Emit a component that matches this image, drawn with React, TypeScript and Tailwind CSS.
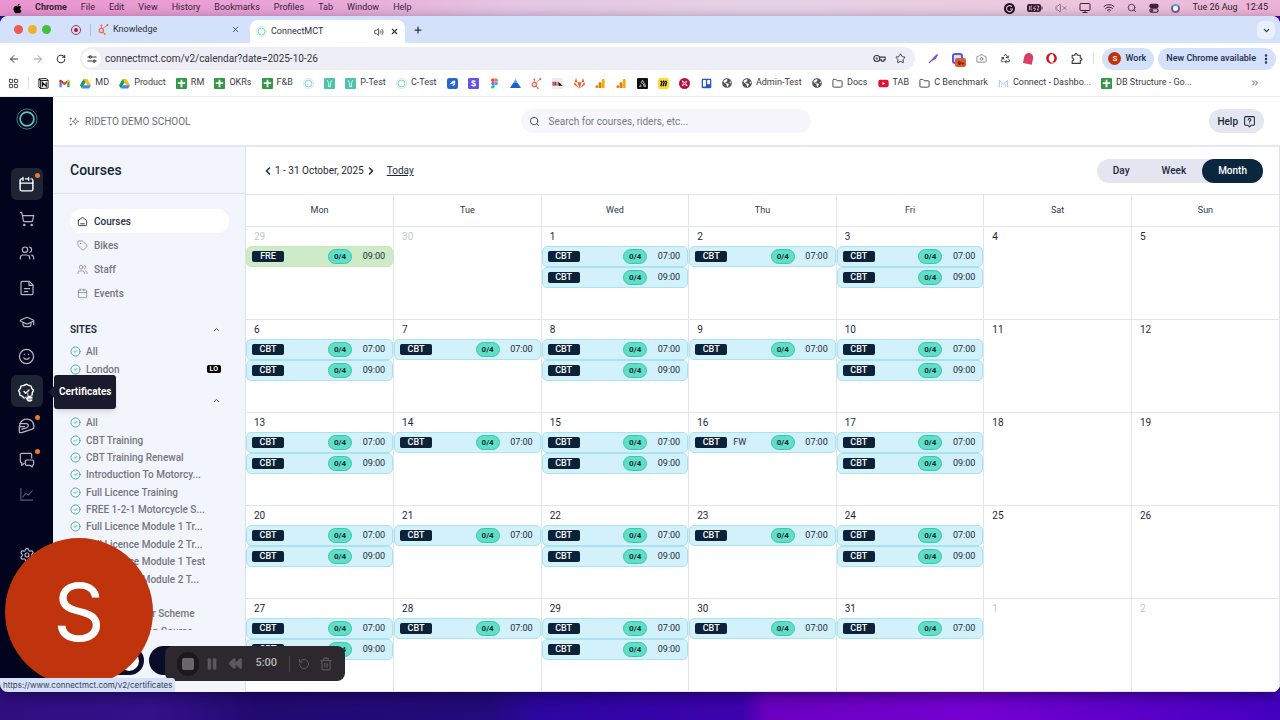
import React from 'react';
import {
    ArrowLeft, ArrowRight, Camera, ChevronDown, ChevronLeft, ChevronRight, ChevronUp, ChevronsRight,
    CircleCheck, EllipsisVertical, Folder, GraduationCap, LayoutGrid, Monitor, Pause,
    Plus, Recycle, Rewind, RotateCcw, RotateCw, Search, Settings, ShoppingCart, Smile, Star, Tag,
    Trash2, Users, Volume2, VolumeX, Wifi, X,
} from 'lucide-react';
import { FaApple, FaGitlab, FaGlobeAmericas, FaHubspot, FaOpera, FaTrello, FaYoutube } from 'react-icons/fa';

type Svg = React.SVGProps<SVGSVGElement>;

const Line: React.FC<Svg> = ({ children, ...props }) => (
    <svg viewBox="0 0 24 24" fill="none" stroke="currentColor" strokeWidth={1.5} strokeLinecap="round" strokeLinejoin="round" {...props}>
        {children}
    </svg>
);

const CalendarIcon: React.FC<Svg> = (props) => (
    <Line {...props}>
        <path d="M15 4V2M15 4V6M15 4H10.5M3 10V19C3 20.1 3.9 21 5 21H19C20.1 21 21 20.1 21 19V10H3Z" />
        <path d="M3 10V6C3 4.9 3.9 4 5 4H7M7 2V6M21 10V6C21 4.9 20.1 4 19 4H18.5" />
    </Line>
);

const HomeIcon: React.FC<Svg> = (props) => (
    <Line {...props}>
        <path d="M3 9.5L12 3l9 6.5V19a2 2 0 0 1-2 2H5a2 2 0 0 1-2-2V9.5zM8 17h8" />
    </Line>
);

const PageIcon: React.FC<Svg> = (props) => (
    <Line {...props}>
        <path d="M3 20V4a2 2 0 0 1 2-2h10.500L21 7.500V20a2 2 0 0 1-2 2H5a2 2 0 0 1-2-2z" />
        <path d="M15 2v6h6M8 13h8M8 17.500h5" />
    </Line>
);

const SealIcon: React.FC<Svg> = (props) => (
    <Line {...props}>
        <path d="M10.500 2.500a2.200 2.200 0 0 1 3 0l1.500 1 2 .2a2.200 2.200 0 0 1 2 2.200l.5 1.800 1.500 1.500a2.200 2.200 0 0 1 0 3l-1 1.600.1 2a2.200 2.200 0 0 1-2 2.200l-1.800.6-1.300 1.500a2.200 2.200 0 0 1-3 .4L12 20l-1.600.500a2.200 2.200 0 0 1-3-.4L6.100 18.600 4.300 18a2.200 2.200 0 0 1-2-2.200l.3-2-1-1.600a2.200 2.200 0 0 1 .4-3l1.500-1.500.3-1.800a2.200 2.200 0 0 1 2.200-2.200l2-.2z" />
        <path d="M8.500 12l2.500 2.500 4.500-4.500" />
    </Line>
);

const HelmetIcon: React.FC<Svg> = (props) => (
    <Line {...props}>
        <path d="M2 20.500C1 13 2.500 3 12.500 3 18.500 3 22 7.500 22.500 13c.2 2.500-.5 3.500-2.500 4.200L5 22c-2 .5-2.700 0-3-1.500z" />
        <path d="M3 9.500h8.500c2 0 3 1 3 2.700 0 1.800-1 2.500-2.500 3L5.500 17M2.500 13.500H9" />
    </Line>
);

const ChatsIcon: React.FC<Svg> = (props) => (
    <Line {...props}>
        <path d="M8 17l-4 3v-4a2 2 0 0 1-2-2V4c0-1 1-2 2-2h13a2 2 0 0 1 2 2v5" />
        <path d="M11.500 12h8.500a2 2 0 0 1 2 2v4a2 2 0 0 1-2 2v2.500L16.500 20h-5a2 2 0 0 1-2-2v-4c0-1.100.9-2 2-2z" />
    </Line>
);

const SparkIcon: React.FC<Svg> = (props) => (
    <Line {...props}>
        <path d="M14 5c.8 4.500 2.500 6.200 7 7-4.500.8-6.200 2.500-7 7-.8-4.500-2.500-6.200-7-7 4.500-.8 6.200-2.500 7-7z" />
        <path d="M4 4v3M2.500 5.500h3M4 17v3M2.500 18.500h3M3 11v.500" />
    </Line>
);

const HelpIcon: React.FC<Svg> = (props) => (
    <Line {...props}>
        <path d="M5 3h14a2 2 0 0 1 2 2v12a2 2 0 0 1-2 2h-4l-3 3-3-3H5a2 2 0 0 1-2-2V5c0-1.100.9-2 2-2z" />
        <path d="M9.500 9c0-3.500 5-3.500 5 0 0 2-2.500 2-2.500 4M12 16v.100" />
    </Line>
);

const KeyIcon: React.FC<Svg> = (props) => (
    <Line {...props}>
        <circle cx="7" cy="12" r="5.500" />
        <circle cx="7" cy="12" r="1" />
        <path d="M12 9.500h10.500v5H20v2.500h-4v-2.500h-4" />
    </Line>
);

const PuzzleIcon: React.FC<Svg> = (props) => (
    <Line {...props}>
        <path d="M4 6h5c-1-4 5-4 4.500 0H19v5c4-.5 4 5 0 4.500V21H4v-5c4 0 4-5 0-5z" />
    </Line>
);

const Ring: React.FC<Svg> = (props) => (
    <svg viewBox="0 0 24 24" fill="none" stroke="#5cc8c0" {...props}>
        <circle cx="12" cy="12" r="11" strokeWidth="1" opacity=".7" />
        <circle cx="12" cy="12" r="7.500" strokeWidth="1.800" />
    </svg>
);

const GmailIcon: React.FC<Svg> = (props) => (
    <svg viewBox="0 0 24 24" {...props}>
        <path d="M1 6v14h5V10z" fill="#4285f4" />
        <path d="M23 6v14h-5V10z" fill="#34a853" />
        <path d="M6 5l6 5 6-5v6l-6 5-6-5z" fill="#ea4335" />
        <path d="M1 6c0-3 3-3 5-1v6L1 7.500z" fill="#c5221f" />
        <path d="M23 6c0-3-3-3-5-1v6l5-3.500z" fill="#fbbc04" />
    </svg>
);

const DriveIcon: React.FC<Svg> = (props) => (
    <svg viewBox="0 0 24 24" {...props}>
        <path d="M8 2h8l8 14h-8z" fill="#fbbc04" />
        <path d="M8 2l4 7-8 14-4-7z" fill="#0f9d58" />
        <path d="M4 23l4-7h16l-4 7z" fill="#4285f4" />
    </svg>
);

const SheetIcon: React.FC<Svg> = (props) => (
    <svg viewBox="0 0 24 24" {...props}>
        <rect width="24" height="24" rx="2" fill="#35994a" />
        <path d="M10 4h4v5h6v4h-6v7h-4v-7H4V9h6z" fill="#fff" />
    </svg>
);

const TealIcon: React.FC<Svg> = (props) => (
    <svg viewBox="0 0 24 24" {...props}>
        <rect width="24" height="24" rx="2" fill="#4fc4ac" />
        <path d="M7 5l3 6v8h4v-8l3-6" stroke="#d9fff5" strokeWidth="2" fill="none" />
    </svg>
);

const NotionIcon: React.FC<Svg> = (props) => (
    <svg viewBox="0 0 24 24" {...props}>
        <path d="M2 2l16-1 4 4v17l-17 1-3-4z" fill="#fff" stroke="#111" strokeWidth="2" />
        <path d="M2 2l4 4 16-1M6 6v17M10 19v-9l8 8V9" fill="none" stroke="#111" strokeWidth="2.500" />
    </svg>
);

const JiraIcon: React.FC<Svg> = (props) => (
    <svg viewBox="0 0 24 24" {...props}>
        <rect width="24" height="24" rx="5" fill="#2a62d0" />
        <path d="M5 14l8-8h5v5l-4 1zM12 18l1-4 5-3-1 4z" fill="#fff" />
    </svg>
);

const StripeIcon: React.FC<Svg> = (props) => (
    <svg viewBox="0 0 24 24" {...props}>
        <rect width="24" height="24" rx="3" fill="#6350e8" />
        <path d="M16.500 7.500c-3-1.500-8-1.500-8 1.200 0 3.300 7.500 2.300 7.500 5.800 0 3-5 3-8.500 1.200" fill="none" stroke="#fff" strokeWidth="3" />
    </svg>
);

const FigmaIcon: React.FC<Svg> = (props) => (
    <svg viewBox="0 0 24 24" {...props}>
        <path d="M12 1H8a3.700 3.700 0 0 0 0 7.400h4z" fill="#f24e1e" />
        <path d="M12 1h4a3.700 3.700 0 0 1 0 7.400h-4z" fill="#ff7262" />
        <path d="M12 8.400H8a3.700 3.700 0 0 0 0 7.300h4z" fill="#a259ff" />
        <circle cx="15.700" cy="12" r="3.700" fill="#1abcfe" />
        <path d="M8 15.700h4v3.600a3.700 3.700 0 1 1-4-3.600z" fill="#0acf83" />
    </svg>
);

const PeakIcon: React.FC<Svg> = (props) => (
    <svg viewBox="0 0 24 24" {...props}>
        <path d="M12 2l5 9H7z" fill="#5c9df0" />
        <path d="M7 11h10l7 11H0z" fill="#1f5fc4" />
    </svg>
);

const SwatchIcon: React.FC<Svg> = (props) => (
    <svg viewBox="0 0 24 24" {...props}>
        <rect width="24" height="24" rx="3" fill="#ececf0" />
        <path d="M1 8h5v9H1z" fill="#e0443a" />
        <path d="M6 8h4v9H6z" fill="#4b53c8" />
        <path d="M10 8h4v9h-4z" fill="#f2a33a" />
        <path d="M14 8l9 9h-9z" fill="#111" />
    </svg>
);

const AnalyticsIcon: React.FC<Svg> = (props) => (
    <svg viewBox="0 0 24 24" {...props}>
        <rect x="15" y="2" width="6" height="20" rx="2" fill="#f9ab00" />
        <rect x="8" y="9" width="6" height="13" rx="2" fill="#e37400" />
        <circle cx="4" cy="19" r="3" fill="#e37400" />
    </svg>
);

const SentryIcon: React.FC<Svg> = (props) => (
    <svg viewBox="0 0 24 24" {...props}>
        <rect width="24" height="24" rx="2" fill="#111" />
        <path d="M12 5l7 13h-4c0-4-2-6-5-7M4.500 18H9c0-2-1-3-2-3.500M12 5l-3 5.500" fill="none" stroke="#fff" strokeWidth="1.600" />
    </svg>
);

const MiroIcon: React.FC<Svg> = (props) => (
    <svg viewBox="0 0 24 24" {...props}>
        <rect width="24" height="24" rx="5" fill="#fddc2e" />
        <path d="M6 6l2.500 3L6 18M11 6l2.500 3L11 18M16 6l2.500 3L16 18" fill="none" stroke="#111" strokeWidth="3" />
    </svg>
);

const PinwheelIcon: React.FC<Svg> = (props) => (
    <svg viewBox="0 0 24 24" {...props}>
        <circle cx="12" cy="12" r="12" fill="#b3123f" />
        <path d="M7 6l5 4 5-3-3 5 4 5-6-3-5 3 3-5z" fill="none" stroke="#fff" strokeWidth="1.800" />
    </svg>
);

const MailLightIcon: React.FC<Svg> = (props) => (
    <svg viewBox="0 0 24 24" fill="none" strokeWidth="2" {...props}>
        <path d="M3 20V5l9 8 9-8v15" stroke="#9cc3e6" />
        <path d="M8 20v-8M16 20v-8" stroke="#c8d3e2" />
    </svg>
);

const HandIcon: React.FC<Svg> = (props) => (
    <svg viewBox="0 0 16 18" {...props}>
        <path d="M5 9V2.500C5 .8 7.500.8 7.500 2.500V7c.5-1 2-.8 2.200.2.600-.8 2-.5 2.100.5.800-.6 2.200-.2 2.200 1v3.500c0 3-1.500 4.800-4.500 4.800S5 15.800 4 14l-2.500-4C1 8.500 3 8 4 9.300z" fill="#fff" stroke="#111" strokeWidth="1" />
        <path d="M7.500 11v3M9.500 11v3M11.500 11v3" stroke="#111" strokeWidth=".8" />
    </svg>
);

const icon = 'size-[11px] shrink-0';

const bookmarks: { icon: React.ReactNode; label?: string; name?: string }[] = [
    { icon: <NotionIcon className={icon} />, name: 'Notion' },
    { icon: <GmailIcon className={icon} />, name: 'Gmail' },
    { icon: <DriveIcon className={icon} />, label: 'MD' },
    { icon: <DriveIcon className={icon} />, label: 'Product' },
    { icon: <SheetIcon className={icon} />, label: 'RM' },
    { icon: <SheetIcon className={icon} />, label: 'OKRs' },
    { icon: <SheetIcon className={icon} />, label: 'F&B' },
    { icon: <Ring className={icon} />, name: 'Connect' },
    { icon: <TealIcon className={icon} />, name: 'Test' },
    { icon: <TealIcon className={icon} />, label: 'P-Test' },
    { icon: <Ring className={icon} />, label: 'C-Test' },
    { icon: <JiraIcon className={icon} />, name: 'Jira' },
    { icon: <StripeIcon className={icon} />, name: 'Stripe' },
    { icon: <FigmaIcon className={icon} />, name: 'Figma' },
    { icon: <PeakIcon className={icon} />, name: 'Peak' },
    { icon: <FaHubspot className="size-[11px] shrink-0 -scale-x-100 text-[#ee6a4c]" />, name: 'HubSpot' },
    { icon: <SwatchIcon className={icon} />, name: 'Swatch' },
    { icon: <FaGitlab className="size-[11px] shrink-0 text-[#e8622c]" />, name: 'GitLab' },
    { icon: <AnalyticsIcon className={icon} />, name: 'Analytics' },
    { icon: <AnalyticsIcon className={icon} />, name: 'Analytics' },
    { icon: <SentryIcon className={icon} />, name: 'Sentry' },
    { icon: <MiroIcon className={icon} />, name: 'Miro' },
    { icon: <PinwheelIcon className={icon} />, name: 'Pinwheel' },
    { icon: <FaTrello className="size-[11px] shrink-0 text-[#2a55c4]" />, name: 'Trello' },
    { icon: <FaGlobeAmericas className="size-[10px] shrink-0 text-[#55565c]" />, name: 'Website' },
    { icon: <FaGlobeAmericas className="size-[10px] shrink-0 text-[#55565c]" />, label: 'Admin-Test' },
    { icon: <FaGlobeAmericas className="size-[10px] shrink-0 text-[#55565c]" />, name: 'Website' },
    { icon: <Folder className={icon} />, label: 'Docs' },
    { icon: <FaYoutube className="size-[11px] shrink-0 text-[#e01234]" />, label: 'TAB' },
    { icon: <Folder className={icon} />, label: 'C Benchmark' },
    { icon: <MailLightIcon className={icon} />, label: 'Connect - Dashbo...' },
    { icon: <SheetIcon className={icon} />, label: 'DB Structure - Go...' },
];

const menus = ['File', 'Edit', 'View', 'History', 'Bookmarks', 'Profiles', 'Tab', 'Window', 'Help'];

const MenuBar = () => (
    <div className="flex h-4 shrink-0 items-center px-3 text-[9px] text-[#3b2337]">
        <FaApple className="size-[11px] text-black" />
        <span className="ml-3 font-bold">Chrome</span>
        <div className="ml-[14px] flex gap-[14px]">
            {menus.map((menu) => <span key={menu}>{menu}</span>)}
        </div>
        <div className="ml-auto flex items-center gap-3">
            <svg viewBox="0 0 24 24" className="size-[11px]">
                <circle cx="12" cy="12" r="12" fill="#1c1219" />
                <path d="M17 8a6.500 6.500 0 1 0 1.500 5H13" fill="none" stroke="#eebcdb" strokeWidth="2.500" />
            </svg>
            <svg viewBox="0 0 32 16" className="h-2 w-4">
                <rect width="28" height="16" rx="4" fill="#3b2337" />
                <path d="M30 5v6" stroke="#3b2337" strokeWidth="2" />
                <path d="M5 4v8M10 4H8v8h2M17 3l-4 6h4l-2 5M20 4h4l-3 8h3" fill="none" stroke="#eebcdb" strokeWidth="1.500" />
            </svg>
            <VolumeX className="size-3 opacity-50" />
            <Monitor className="size-3" />
            <Wifi className="size-3" />
            <Search className="size-[10px]" />
            <Line className="size-[10px]" strokeWidth={2.5}>
                <rect x="2" y="3" width="20" height="8" rx="4" fill="currentColor" />
                <rect x="2" y="14" width="20" height="8" rx="4" />
                <circle cx="7" cy="18" r="2" fill="currentColor" />
            </Line>
            <span className="size-[9px] rounded-full border-2 border-[#6f5f9c] border-t-[#3fb4c4] bg-white" />
            <span className="flex gap-2 text-[#2e1f2c]"><span>Tue 26 Aug</span><span>12:45</span></span>
        </div>
    </div>
);

const TabStrip = () => (
    <div className="flex h-[27px] shrink-0 items-end rounded-t-lg bg-[#d4e1fb] text-[9px] text-[#2c3140]">
        <div className="flex h-full w-[250px] items-center pl-[14px]">
            <div className="flex gap-[5px]">
                <span className="size-[9px] rounded-full bg-[#ec5a52]" />
                <span className="size-[9px] rounded-full bg-[#f0b12b]" />
                <span className="size-[9px] rounded-full bg-[#44c13c]" />
            </div>
            <span className="ml-5 flex size-[10px] items-center justify-center rounded-full border border-[#a33346]">
                <span className="size-1 rounded-full bg-[#b3122b]" />
            </span>
            <span className="ml-[9px] h-3 w-px bg-[#aebcd8]" />
            <FaHubspot className="ml-[7px] size-[11px] -scale-x-100 text-[#ee6a4c]" />
            <span className="ml-1">Knowledge</span>
            <button aria-label="Close Knowledge" className="mr-[10px] ml-auto"><X className="size-[9px]" /></button>
        </div>
        <div className="flex h-[23px] w-[155px] items-center rounded-t-lg bg-white px-[6px]">
            <Ring className="size-[11px]" />
            <span className="ml-1">ConnectMCT</span>
            <Volume2 className="ml-auto size-[10px]" />
            <button aria-label="Close ConnectMCT" className="ml-[6px]"><X className="size-[9px]" strokeWidth={3} /></button>
        </div>
        <button aria-label="New tab" className="mb-[8px] ml-2"><Plus className="size-[10px]" strokeWidth={3} /></button>
        <button aria-label="Search tabs" className="mr-[5px] mb-1 ml-auto flex size-[18px] items-center justify-center rounded-md bg-[#eaf1fd]">
            <ChevronDown className="size-[9px]" strokeWidth={3} />
        </button>
    </div>
);

const AddressBar = () => (
    <div className="flex h-[31px] shrink-0 items-center bg-white pr-1 pl-2 text-[#35353c]">
        <div className="flex w-[72px] items-center gap-[12px]">
            <button aria-label="Back"><ArrowLeft className="size-3" /></button>
            <button aria-label="Forward" className="text-[#9a9aa2]"><ArrowRight className="size-3" /></button>
            <button aria-label="Reload"><RotateCw className="size-[10px]" strokeWidth={2.5} /></button>
        </div>
        <div className="flex h-[23px] flex-1 items-center rounded-full bg-[#eeeef6] pr-[9px] pl-[2px]">
            <span className="flex size-[19px] items-center justify-center rounded-full bg-white">
                <Line className="size-[10px]" strokeWidth={2.5}>
                    <path d="M2 7h3M12 7h10M2 17h10M20 17h2" />
                    <circle cx="8" cy="7" r="2.500" />
                    <circle cx="17" cy="17" r="2.500" />
                </Line>
            </span>
            <input aria-label="Address" defaultValue="connectmct.com/v2/calendar?date=2025-10-26" className="ml-1 min-w-0 flex-1 text-[10px] outline-none" />
            <KeyIcon className="size-[13px]" strokeWidth={2} />
            <Star className="ml-[9px] size-[11px]" />
        </div>
        <div className="ml-[13px] flex items-center gap-[13px]">
            <Line className="size-[11px] text-[#7d4fc0]" strokeWidth={3}><path d="M3 21L20 4l-4 8-6 3" /></Line>
            <span className="relative size-[11px] rounded-[3px] border-2 border-[#5a58e0] bg-[#dcdcff]">
                <span className="absolute top-[3px] left-px rounded-[2px] bg-[#e05a2e] px-[2px] text-[6px] leading-[9px] font-bold text-[#3b1505]">9+</span>
            </span>
            <Camera className="size-[11px] text-[#85858c]" />
            <Recycle className="size-[11px]" />
            <span className="h-[11px] w-[9px] rotate-12 rounded-t-full rounded-b-md bg-[#d93f68]" />
            <FaOpera className="size-[11px] text-[#d3101d]" />
            <PuzzleIcon className="size-[13px]" strokeWidth={2} />
        </div>
        <span className="ml-[10px] h-[11px] w-px bg-[#d4dcf0]" />
        <button className="ml-2 flex h-[22px] items-center gap-1 rounded-full bg-[#d4e1fb] pr-2 pl-[6px] text-[9px] font-medium text-[#1d2b4a]">
            <span className="flex size-[13px] items-center justify-center rounded-full bg-[#bd330e] text-[8px] text-white">S</span>
            Work
        </button>
        <button className="ml-1 flex h-[22px] items-center gap-1 rounded-full bg-[#d4e1fb] pr-1 pl-2 text-[9px] font-medium text-[#1d2b4a]">
            New Chrome available
            <EllipsisVertical className="size-3" strokeWidth={3} />
        </button>
    </div>
);

const BookmarkBar = () => (
    <div className="flex h-[23px] shrink-0 items-center border-b border-[#ececf0] bg-white pr-5 pb-[4px] pl-2 text-[9px] text-[#3a3b42]">
        <LayoutGrid className="size-[11px]" />
        <span className="ml-[9px] h-3 w-px bg-[#dcdce4]" />
        <div className="mr-[58px] ml-[9px] flex flex-1 items-center justify-between">
            {bookmarks.map((bookmark, idx) => (
                <a key={idx} href="#" aria-label={bookmark.name} className="flex items-center gap-1 whitespace-nowrap">
                    {bookmark.icon}
                    {bookmark.label}
                </a>
            ))}
        </div>
        <ChevronsRight className="size-[10px]" />
    </div>
);

const railItems: { label: string; icon: React.ReactNode; dot?: boolean; active?: boolean; dim?: boolean }[] = [
    { label: 'Calendar', icon: <CalendarIcon className="size-[17px]" strokeWidth={2} />, dot: true, active: true },
    { label: 'Orders', icon: <ShoppingCart className="size-4" strokeWidth={1.8} /> },
    { label: 'Riders', icon: <Users className="size-4" strokeWidth={1.8} /> },
    { label: 'Documents', icon: <PageIcon className="size-4" strokeWidth={1.8} /> },
    { label: 'Training', icon: <GraduationCap className="size-4" strokeWidth={1.8} /> },
    { label: 'Customers', icon: <Smile className="size-[17px]" strokeWidth={1.8} /> },
    { label: 'Certificates', icon: <SealIcon className="size-[17px]" strokeWidth={2} />, active: true },
    { label: 'Bikes', icon: <HelmetIcon className="size-[17px]" strokeWidth={1.8} />, dot: true },
    { label: 'Messages', icon: <ChatsIcon className="size-4" strokeWidth={1.8} />, dot: true },
    { label: 'Reports', icon: <Line className="size-[15px]" strokeWidth={1.8}><path d="M3 2v19h19M6 16l5-6 4 3 6-7" /></Line>, dim: true },
];

const Rail = () => (
    <nav className="relative flex w-[53px] shrink-0 flex-col items-center bg-[#02031c] pt-[11px] text-[#b4b5c4]">
        <Ring className="size-[22px]" />
        <div className="mt-[38px] flex h-[343px] flex-col justify-between">
            {railItems.map((item) => (
                <a
                    key={item.label}
                    href="#"
                    aria-label={item.label}
                    className={`relative flex size-8 items-center justify-center rounded-md ${item.active ? 'bg-[#1d2433] text-white' : ''} ${item.dim ? 'opacity-50' : ''}`}
                >
                    {item.icon}
                    {item.dot && <span className="absolute top-[5px] right-[3px] size-[5px] rounded-full bg-[#f0742a]" />}
                </a>
            ))}
        </div>
        <a href="#" aria-label="Settings" className="mt-9"><Settings className="size-4" strokeWidth={1.8} /></a>
        <div className="absolute top-[278px] left-[46px] z-20 flex items-center">
            <span className="-mr-1 ml-1 size-2 rotate-45 bg-[#191a2c]" />
            <span role="tooltip" className="rounded-[3px] bg-[#191a2c] px-[5px] py-[9px] text-[10px] leading-4 font-bold text-white shadow-md">Certificates</span>
        </div>
        <HandIcon className="absolute top-[294px] left-6 h-3 w-[10px]" />
    </nav>
);

const views = [
    { label: 'Courses', icon: <HomeIcon className="size-[11px]" strokeWidth={2} /> },
    { label: 'Bikes', icon: <Tag className="size-[11px]" strokeWidth={1.5} /> },
    { label: 'Staff', icon: <Users className="size-[11px]" strokeWidth={1.5} /> },
    { label: 'Events', icon: <CalendarIcon className="size-[11px]" /> },
];

const courseTypes = [
    'All',
    'CBT Training',
    'CBT Training Renewal',
    'Introduction To Motorcy...',
    'Full Licence Training',
    'FREE 1-2-1 Motorcycle S...',
    'Full Licence Module 1 Tr...',
    'Full Licence Module 2 Tr...',
    'Full Licence Module 1 Test',
    'Full Licence Module 2 T...',
    'Gear',
    'Enhanced Rider Scheme',
    'Bike Conversion Course',
];

const FilterRow: React.FC<{ label: string; badge?: string }> = ({ label, badge }) => (
    <label className="relative flex items-center gap-[5px] whitespace-nowrap">
        <input type="checkbox" defaultChecked className="sr-only" />
        <CircleCheck className="size-[11px] shrink-0 text-[#3fae98]" />
        {label}
        {badge && <span className="ml-auto rounded-[2px] bg-black px-[3px] text-[7px] leading-2 font-bold text-white">{badge}</span>}
    </label>
);

const GroupTitle: React.FC<{ title: string }> = ({ title }) => (
    <button className="flex h-5 w-full items-center justify-between text-[10px] font-semibold text-[#1b2a3a]">
        {title}
        <ChevronUp className="size-[9px]" />
    </button>
);

const Sidebar = () => (
    <aside className="flex w-[193px] shrink-0 flex-col border-r border-[#dfe2ea] bg-[#f3f5fc] pl-px">
        <h1 className="flex h-[47px] shrink-0 items-center border-b border-[#e0e3eb] pl-4 text-[14px] font-medium text-[#13273a]">Courses</h1>
        <ul className="mx-4 mt-[15px] text-[10px] font-medium text-[#73767f]">
            {views.map((view, idx) => (
                <li key={view.label}>
                    <a href="#" className={`flex h-6 items-center gap-[6px] rounded-full pl-[7px] ${idx === 0 ? 'bg-white text-[#26323f]' : ''}`}>
                        {view.icon}
                        {view.label}
                    </a>
                </li>
            ))}
        </ul>
        <div className="mt-[14px] mr-6 ml-4 text-[10px] font-medium text-[#73767f]">
            <GroupTitle title="SITES" />
            <div className="mt-1 grid h-[35px] auto-rows-fr">
                <FilterRow label="All" />
                <FilterRow label="London" badge="LO" />
            </div>
            <div className="mt-3"><GroupTitle title="COURSES" /></div>
            <div className="mt-1 h-[216px] overflow-hidden">
                <div className="grid h-[226px] auto-rows-fr">
                    {courseTypes.map((course) => <FilterRow key={course} label={course} />)}
                </div>
            </div>
        </div>
        <div className="mt-4 ml-4 flex gap-[5px]">
            <button aria-label="Filters" className="flex h-[29px] w-[74px] items-center justify-end rounded-full bg-[#0a0c2a] pr-[5px]">
                <span className="size-5 rounded-full bg-white" />
            </button>
            <button aria-label="Collapse" className="h-[29px] w-[74px] rounded-full bg-[#0a0c2a]" />
        </div>
    </aside>
);

interface CourseEvent {
    code: string;
    time: string;
    note?: string;
}

const one: CourseEvent[] = [{ code: 'CBT', time: '07:00' }];
const two: CourseEvent[] = [...one, { code: 'CBT', time: '09:00' }];

interface Day {
    date: number;
    muted?: boolean;
    events?: CourseEvent[];
}

const weeks: Day[][] = [
    [
        { date: 29, muted: true, events: [{ code: 'FRE', time: '09:00' }] }, { date: 30, muted: true },
        { date: 1, events: two }, { date: 2, events: one }, { date: 3, events: two }, { date: 4 }, { date: 5 },
    ],
    [
        { date: 6, events: two }, { date: 7, events: one }, { date: 8, events: two }, { date: 9, events: one },
        { date: 10, events: two }, { date: 11 }, { date: 12 },
    ],
    [
        { date: 13, events: two }, { date: 14, events: one }, { date: 15, events: two },
        { date: 16, events: [{ code: 'CBT', time: '07:00', note: 'FW' }] },
        { date: 17, events: two }, { date: 18 }, { date: 19 },
    ],
    [
        { date: 20, events: two }, { date: 21, events: one }, { date: 22, events: two }, { date: 23, events: one },
        { date: 24, events: two }, { date: 25 }, { date: 26 },
    ],
    [
        { date: 27, events: two }, { date: 28, events: one }, { date: 29, events: two }, { date: 30, events: one },
        { date: 31, events: one }, { date: 1, muted: true }, { date: 2, muted: true },
    ],
];

const EventRow: React.FC<{ event: CourseEvent }> = ({ event }) => (
    <button className={`flex h-[21px] w-full items-center rounded-[5px] border pr-[7px] pl-[5px] text-[9px] text-[#1b2a3a] ${event.code === 'FRE' ? 'border-[#c8e9c0] bg-[#cdebc6]' : 'border-[#a9e4ee] bg-[#d3f1fa]'}`}>
        <span className="w-8 rounded-[2px] bg-[#0b2238] text-center leading-[11px] font-medium text-white">{event.code}</span>
        {event.note && <span className="ml-[6px]">{event.note}</span>}
        <span className="ml-auto w-6 rounded-full border border-[#3cc5ad] bg-[#5fe0c6] text-center text-[8px] leading-[13px] font-bold">0/4</span>
        <span className="w-[33px] text-right">{event.time}</span>
    </button>
);

const Calendar = () => (
    <main className="flex min-w-0 flex-1 flex-col border-r border-[#e0e0ea] bg-white">
        <div className="flex h-[47px] shrink-0 items-center pr-4 pl-4 text-[10px] text-[#1b2a3a]">
            <button aria-label="Previous month"><ChevronLeft className="size-3" strokeWidth={3} /></button>
            <span className="mx-px">1 - 31 October, 2025</span>
            <button aria-label="Next month"><ChevronRight className="size-3" strokeWidth={3} /></button>
            <button className="ml-[10px] underline">Today</button>
            <div className="ml-auto flex h-6 rounded-full bg-[#e4e5f0] font-medium">
                <button className="px-4">Day</button>
                <button className="px-4">Week</button>
                <button className="rounded-full bg-[#0b2740] px-4 text-white">Month</button>
            </div>
        </div>
        <table className="w-full table-fixed border-collapse">
            <thead>
                <tr className="h-8 text-[9px] text-[#2c3947]">
                    {['Mon', 'Tue', 'Wed', 'Thu', 'Fri', 'Sat', 'Sun'].map((day) => (
                        <th key={day} className="border border-[#e4e4ec] p-0 font-normal first:border-l-0 last:border-r-0">{day}</th>
                    ))}
                </tr>
            </thead>
            <tbody>
                {weeks.map((week, idx) => (
                    <tr key={idx} className="h-[93px]">
                        {week.map((day) => (
                            <td key={day.date} className="border border-[#e4e4ec] p-0 align-top first:border-l-0 last:border-r-0">
                                <div className={`pl-2 text-[10px] leading-[19px] ${day.muted ? 'text-[#c3c6ce]' : 'text-[#1b2a3a]'}`}>{day.date}</div>
                                {day.events?.map((event) => <EventRow key={event.time} event={event} />)}
                            </td>
                        ))}
                    </tr>
                ))}
            </tbody>
        </table>
    </main>
);

const Header = () => (
    <header className="grid h-[50px] shrink-0 grid-cols-3 items-center border-b-2 border-[#e6e7ee] bg-white px-4 text-[10px]">
        <div className="flex items-center gap-[5px] text-[#6b6e78]">
            <SparkIcon className="size-[11px]" strokeWidth={2} />
            RIDETO DEMO SCHOOL
        </div>
        <label className="flex h-6 w-[290px] items-center gap-2 justify-self-center rounded-full bg-[#f6f6fc] px-2 text-[#3b4450]">
            <Search className="size-[11px]" />
            <input type="search" aria-label="Search" placeholder="Search for courses, riders, etc..." className="min-w-0 flex-1 outline-none placeholder:text-[#767a84]" />
        </label>
        <button className="flex h-6 items-center gap-[5px] justify-self-end rounded-full bg-[#e4e6f1] px-2 font-medium text-[#1b2a3a]">
            Help
            <HelpIcon className="size-[13px]" strokeWidth={2} />
        </button>
    </header>
);

const Recorder = () => (
    <div className="absolute bottom-[11px] left-[165px] z-30 flex h-[35px] w-[180px] items-center rounded-lg bg-[#2c282e] px-3 text-[#5d585f]">
        <button aria-label="Stop" className="flex size-6 items-center justify-center rounded-full bg-[#1c191e]"><span className="size-3 rounded-[2px] bg-[#6a656b]" /></button>
        <button aria-label="Pause" className="ml-[6px]"><Pause className="size-[14px] fill-current" strokeWidth={1} /></button>
        <button aria-label="Rewind" className="ml-[9px]"><Rewind className="size-[15px] fill-current" strokeWidth={1} /></button>
        <span className="ml-3 text-[11px] font-medium text-[#b9b5ba]">5:00</span>
        <span className="ml-3 h-4 w-px bg-[#4b474d]" />
        <button aria-label="Restart" className="ml-2"><RotateCcw className="size-3" /></button>
        <button aria-label="Delete" className="ml-[9px]"><Trash2 className="size-[14px]" /></button>
    </div>
);

const App: React.FC = () => (
    <div className="flex min-h-screen flex-col bg-[linear-gradient(90deg,#300e80_0%,#34108a_12%,#210a70_20%,#220b7a_38%,#2c06a0_42%,#3d02ae_58%,#6a00c0_60%,#7600d2_76%,#5c00c8_88%,#4300c0_100%)] font-[Roboto,'Liberation_Sans',sans-serif]">
        <div className="bg-[linear-gradient(90deg,#ea94cf_0%,#e9a6d8_25%,#e4c6e3_40%,#e5d2e6_60%,#ebc9e0_80%,#edb3d7_100%)]">
            <MenuBar />
        </div>
        <div className="relative mb-7 flex flex-1 flex-col overflow-hidden rounded-lg bg-white shadow-[0_4px_14px_rgba(10,0,40,0.5)]">
            <TabStrip />
            <AddressBar />
            <BookmarkBar />
            <div className="flex flex-1">
                <Rail />
                <div className="flex min-w-0 flex-1 flex-col">
                    <Header />
                    <div className="flex flex-1">
                        <Sidebar />
                        <Calendar />
                    </div>
                </div>
            </div>
            {/* Presenter bubble */}
            <div className="absolute bottom-[6px] left-[5px] z-20 flex size-[148px] items-center justify-center rounded-full bg-[#bf340c] font-[Inter] text-[80px] leading-none text-white">S</div>
            <Recorder />
            <div className="absolute bottom-0 left-0 z-40 h-[14px] rounded-tr-[3px] bg-[#d4e1fb] px-[3px] font-[Inter] text-[8px] leading-[14px] text-[#39404e]">https://www.connectmct.com/v2/certificates</div>
        </div>
    </div>
);

export default App;
